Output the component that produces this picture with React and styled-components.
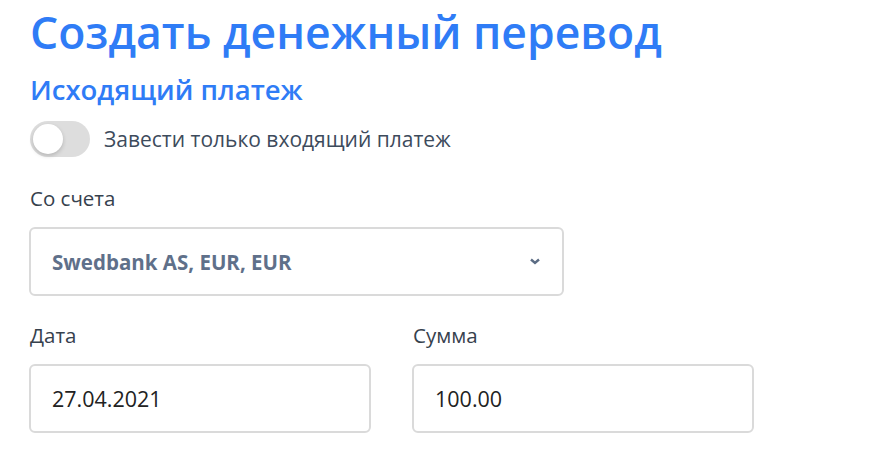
import styled, { createGlobalStyle } from 'styled-components'

const Global = createGlobalStyle`
    body {
        margin: 0;
        background: #fff;
        font-family: "Open Sans", "Noto Sans", sans-serif;
    }
`

const Page = styled.main`
    padding: 4px 30px 0 29px;
    display: flex;
    flex-direction: column;
`

const Title = styled.h1`
    margin: 0 0 0 1px;
    font-size: 44.5px;
    font-weight: 600;
    color: #2f7cf6;
    line-height: 56px;
`

const SubTitle = styled.h2`
    margin: 14px 0 0 1px;
    font-size: 27.5px;
    font-weight: 600;
    color: #2f7cf6;
    line-height: 32px;
`

const ToggleRow = styled.label`
    display: flex;
    align-items: center;
    gap: 14px;
    margin: 15px 0 0 1px;
`

const Track = styled.span`
    position: relative;
    width: 60px;
    height: 36px;
    border-radius: 18px;
    background: ${p => (p.on ? '#2f7cf6' : '#dddddd')};
    flex-shrink: 0;
`

const Knob = styled.span`
    position: absolute;
    top: 3px;
    left: ${p => (p.on ? '27px' : '3px')};
    width: 30px;
    height: 30px;
    border-radius: 50%;
    background: #fff;
    box-shadow: 0 2px 4px rgba(0, 0, 0, 0.18);
`

const ToggleText = styled.span`
    font-size: 21px;
    color: #3d4b5c;
`

const Label = styled.div`
    font-size: 20.5px;
    color: #36414d;
    margin: ${p => p.top || 26}px 0 0 1px;
    line-height: 26px;
`

const Box = styled.div`
    box-sizing: border-box;
    width: ${p => p.w}px;
    height: 69px;
    margin-top: 16px;
    border: 2px solid #dadada;
    border-radius: 6px;
    display: flex;
    align-items: center;
    justify-content: space-between;
    padding: 0 22px 0 21px;
    font-size: ${p => (p.bold ? 20.5 : 21.5)}px;
    color: ${p => (p.muted ? '#5f708a' : '#222')};
    font-weight: ${p => (p.bold ? 700 : 400)};
`

const Row = styled.div`
    display: flex;
    gap: 41px;
`

const Field = styled.div`
    display: flex;
    flex-direction: column;
`

const Chevron = () => (
    <svg width="10" height="7" viewBox="0 0 10 7">
        <path d="M1 1.5 L5 5 L9 1.5" fill="none" stroke="#5b6c84" strokeWidth="2.4" />
    </svg>
)

export default function App() {
    return (
        <>
            <Global />
            <Page>
                <Title>Создать денежный перевод</Title>
                <SubTitle>Исходящий платеж</SubTitle>
                <ToggleRow>
                    <Track on={false}><Knob on={false} /></Track>
                    <ToggleText>Завести только входящий платеж</ToggleText>
                </ToggleRow>
                <Label top={28}>Со счета</Label>
                <Box w={535} muted bold>
                    <span>Swedbank AS, EUR, EUR</span>
                    <Chevron />
                </Box>
                <Row>
                    <Field>
                        <Label>Дата</Label>
                        <Box w={342}>27.04.2021</Box>
                    </Field>
                    <Field>
                        <Label>Сумма</Label>
                        <Box w={342}>100.00</Box>
                    </Field>
                </Row>
            </Page>
        </>
    )
}
